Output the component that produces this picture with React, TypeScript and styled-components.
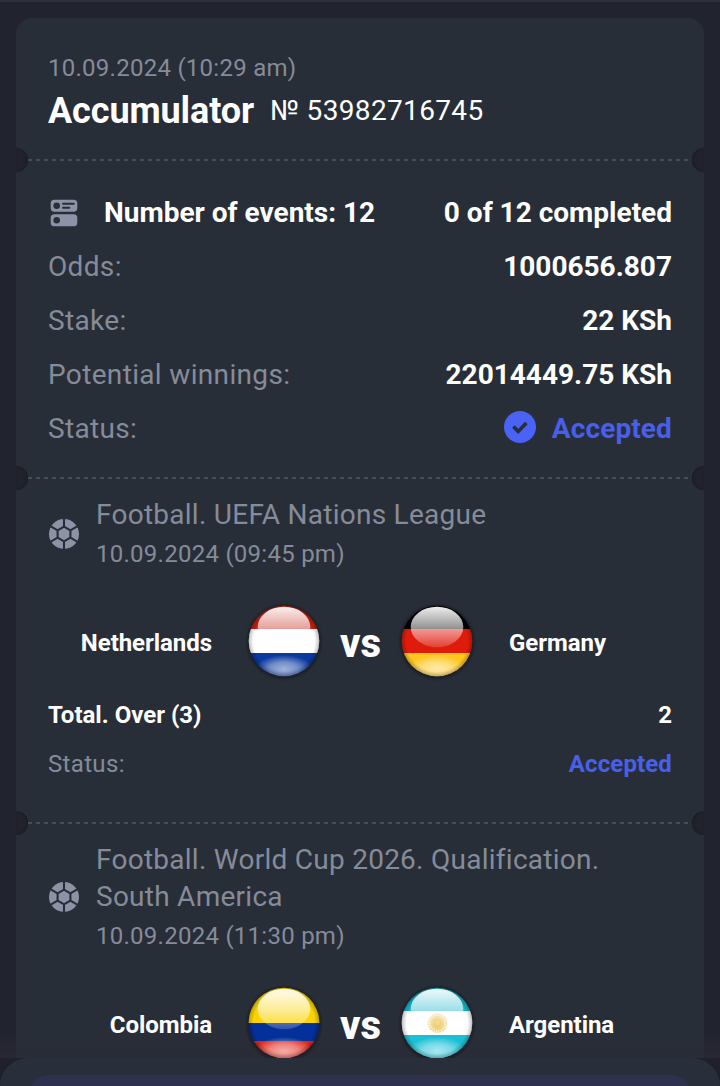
import React from "react";
import styled, { createGlobalStyle } from "styled-components";

const c = {
  page: "#21232e",
  card: "#282e38",
  muted: "#868b9a",
  white: "#ffffff",
  accent: "#485fec",
  icon: "#8d92a6",
  dash: "#474c58",
  notch: "#20222c",
};

const Global = createGlobalStyle`
  * { box-sizing: border-box; }
  body {
    margin: 0;
    background: ${c.page};
    font-family: Roboto, "Liberation Sans", sans-serif;
    overflow: hidden;
  }
`;

const Screen = styled.main`
  position: relative;
  height: 1086px;
  overflow: hidden;
  border-top: 2px solid #2b303b;
  background: ${c.page};
  padding: 16px 16px 0;
`;

const Card = styled.article`
  background: ${c.card};
  border-radius: 16px 16px 0 0;
`;

const Section = styled.section<{ $h: number; $pad: string }>`
  position: relative;
  height: ${(p) => p.$h}px;
  padding: ${(p) => p.$pad};
`;

const Perforation = styled.div`
  position: absolute;
  left: 0;
  right: 0;
  bottom: -12px;
  height: 24px;
  display: flex;
  align-items: center;
  justify-content: space-between;
  overflow: hidden;
  z-index: 1;
`;

const Notch = styled.span<{ $side: "left" | "right" }>`
  width: 12px;
  height: 24px;
  background: ${c.notch};
  border-radius: ${(p) => (p.$side === "left" ? "0 12px 12px 0" : "12px 0 0 12px")};
  box-shadow: inset ${(p) => (p.$side === "left" ? "-1px" : "1px")} 0 2px #1a1b24;
`;

const Dashes = styled.span`
  flex: 1;
  height: 2px;
  background: repeating-linear-gradient(90deg, ${c.dash} 0 4px, transparent 4px 8px);
`;

const DateText = styled.div<{ $mt?: number }>`
  margin-top: ${(p) => p.$mt ?? 0}px;
  font-size: 24px;
  line-height: 30px;
  letter-spacing: 0.26px;
  color: ${c.muted};
`;

const TitleRow = styled.div`
  display: flex;
  align-items: center;
  gap: 16px;
  margin-top: 8px;
  height: 40px;
  color: ${c.white};
`;

const Title = styled.h1`
  margin: 0;
  font-size: 36px;
  line-height: 40px;
  font-weight: 700;
  letter-spacing: -0.1px;
`;

const Ticket = styled.span`
  font-size: 28px;
  line-height: 40px;
  letter-spacing: 0.35px;
`;

const Row = styled.div`
  display: flex;
  align-items: center;
  justify-content: space-between;
  height: 54px;
  font-size: 28px;
`;

const Label = styled.span`
  color: ${c.muted};
  letter-spacing: 0.34px;
`;

const Value = styled.span<{ $accent?: boolean }>`
  display: flex;
  align-items: center;
  gap: 16px;
  font-weight: 700;
  letter-spacing: ${(p) => (p.$accent ? "0.12px" : "normal")};
  color: ${(p) => (p.$accent ? c.accent : c.white)};
`;

const EventsLabel = styled(Value)`
  gap: 24px;
`;

const EventHead = styled.header`
  display: flex;
  align-items: center;
  gap: 16px;
`;

const League = styled.h2`
  margin: 0;
  font-size: 28px;
  line-height: 37px;
  font-weight: 400;
  letter-spacing: 0.26px;
  color: ${c.muted};
  max-width: 540px;
`;

const Teams = styled.div`
  position: relative;
  z-index: 2;
  display: grid;
  grid-template-columns: 164px 36px 72px 81px 72px 36px 1fr;
  grid-template-rows: 72px;
  align-items: center;
  margin-top: 36px;
`;

const Team = styled.span<{ $home?: boolean }>`
  grid-column: ${(p) => (p.$home ? 1 : 7)};
  grid-row: 1;
  font-size: 24px;
  line-height: 30px;
  font-weight: 700;
  letter-spacing: -0.05px;
  color: ${c.white};
  text-align: ${(p) => (p.$home ? "right" : "left")};
  padding-top: 3px;
`;

const Versus = styled.span`
  grid-column: 4;
  grid-row: 1;
  padding-top: 6px;
  font-size: 40px;
  line-height: 40px;
  font-weight: 800;
  text-align: center;
  color: ${c.white};
`;

const FlagSlot = styled.span<{ $col: number }>`
  grid-column: ${(p) => p.$col};
  grid-row: 1;
  display: block;
  height: 72px;
  svg { display: block; overflow: visible; }
`;

const BetRow = styled.div<{ $mt: number }>`
  display: flex;
  justify-content: space-between;
  margin-top: ${(p) => p.$mt}px;
  font-size: 24px;
  line-height: 30px;
`;

const SheetBackdrop = styled.div`
  position: absolute;
  left: 0;
  right: 0;
  bottom: 0;
  height: 56px;
  background: linear-gradient(180deg, rgba(42, 42, 54, 0), rgba(42, 42, 54, 0.7) 28px, #1f2029 28px);
  z-index: 1;
`;

const Sheet = styled.footer`
  position: absolute;
  left: 0;
  right: 0;
  bottom: 0;
  height: 28px;
  padding: 17px 31px 0;
  background: #292f3a;
  border-radius: 36px 36px 0 0;
  overflow: hidden;
  z-index: 3;
`;

const SheetButton = styled.div`
  height: 48px;
  border-radius: 16px;
  background: #2d314e;
`;

const EventsSvg = styled.svg`
  margin-top: 2px;
`;

const EventsIcon = () => (
  <EventsSvg width="32" height="32" viewBox="0 0 32 32">
    <rect x="2.7" y="2.7" width="26.6" height="12" rx="3.6" fill={c.icon} />
    <rect x="2.7" y="17.3" width="26.6" height="12" rx="3.6" fill={c.icon} />
    <circle cx="8.7" cy="8.7" r="3.3" fill={c.card} />
    <circle cx="8.7" cy="23.3" r="3.3" fill={c.card} />
    <path d="M15 6.7h10.8M15 10.7h6.3" stroke={c.card} strokeWidth="2" strokeLinecap="round" />
  </EventsSvg>
);

const BallSvg = styled.svg`
  flex: none;
  margin-top: 2px;
`;

const BallIcon = () => (
  <BallSvg width="32" height="32" viewBox="-16 -16 32 32">
    <circle r="15" fill={c.icon} />
    <path
      d="M0-7.4L6.4-3.7V3.7L0 7.4L-6.4 3.7V-3.7Z M0-7V-16M0 7V16M6.4-3.7L14-8.1M6.4 3.7L14 8.1M-6.4 3.7L-14 8.1M-6.4-3.7L-14-8.1"
      fill="none"
      stroke={c.card}
      strokeWidth="2.1"
    />
  </BallSvg>
);

const CheckIcon = () => (
  <svg width="32" height="34" viewBox="0 0 32 34">
    <circle cx="16" cy="16" r="16" fill="#4a62f5" />
    <path d="M9.4 15.6l4.8 4.8 8.2-8.4" fill="none" stroke={c.card} strokeWidth="3.6" />
  </svg>
);

type Band = { color: string; y: number; h: number };
type FlagProps = { id: string; bands: Band[]; sun?: boolean };

const Flag = ({ id, bands, sun }: FlagProps) => (
  <svg width="72" height="72" viewBox="0 0 72 72">
    <defs>
      <clipPath id={`${id}-clip`}>
        <circle cx="36" cy="36" r="35.3" />
      </clipPath>
      <linearGradient id={`${id}-gloss`} x1="0" y1="0" x2="0" y2="1">
        <stop offset="0" stopColor="#fff" stopOpacity="0.93" />
        <stop offset="0.5" stopColor="#fff" stopOpacity="0.6" />
        <stop offset="1" stopColor="#fff" stopOpacity="0.16" />
      </linearGradient>
      <radialGradient id={`${id}-glow`}>
        <stop offset="0" stopColor="#fff" stopOpacity="0.62" />
        <stop offset="0.5" stopColor="#fff" stopOpacity="0.42" />
        <stop offset="1" stopColor="#fff" stopOpacity="0" />
      </radialGradient>
      <radialGradient id={`${id}-edge`}>
        <stop offset="0.86" stopColor="#000" stopOpacity="0" />
        <stop offset="1" stopColor="#000" stopOpacity="0.26" />
      </radialGradient>
      <radialGradient id={`${id}-shadow`}>
        <stop offset="0.88" stopColor="#14161c" stopOpacity="0.7" />
        <stop offset="1" stopColor="#14161c" stopOpacity="0" />
      </radialGradient>
    </defs>
    <circle cx="36" cy="36.8" r="39.5" fill={`url(#${id}-shadow)`} />
    <g clipPath={`url(#${id}-clip)`}>
      {bands.map((b) => (
        <rect key={b.y} x="0" y={b.y} width="72" height={b.h} fill={b.color} />
      ))}
      {sun && (
        <g fill="none">
          <circle cx="36.5" cy="36" r="8.4" stroke="#f1d987" strokeWidth="3" strokeDasharray="1.8 0.6" />
          <circle cx="36.5" cy="36" r="7" fill="#edcb60" />
          <circle cx="36.5" cy="36" r="3.4" strokeWidth="0.8" stroke="#dbb347" />
        </g>
      )}
      <ellipse cx="36" cy="64" rx="29" ry="14" fill={`url(#${id}-glow)`} />
      <circle cx="36" cy="36" r="35.5" fill={`url(#${id}-edge)`} />
      <ellipse cx="36" cy="22" rx="26.3" ry="20.3" fill={`url(#${id}-gloss)`} />
    </g>
  </svg>
);

const flags: Record<string, FlagProps> = {
  Netherlands: {
    id: "nl",
    bands: [{ color: "#c4200f", y: 0, h: 24 }, { color: "#fff", y: 24, h: 24 }, { color: "#0a389f", y: 48, h: 24 }],
  },
  Germany: {
    id: "de",
    bands: [{ color: "#000", y: 0, h: 24 }, { color: "#df1c0c", y: 24, h: 24 }, { color: "#ffc61e", y: 48, h: 24 }],
  },
  Colombia: {
    id: "co",
    bands: [{ color: "#f9d200", y: 0, h: 36 }, { color: "#04309a", y: 36, h: 18 }, { color: "#e0281c", y: 54, h: 18 }],
  },
  Argentina: {
    id: "ar",
    sun: true,
    bands: [{ color: "#17b3c5", y: 0, h: 24 }, { color: "#fff", y: 24, h: 24 }, { color: "#1cc0d6", y: 48, h: 24 }],
  },
};

const Divider = () => (
  <Perforation>
    <Notch $side="left" />
    <Dashes />
    <Notch $side="right" />
  </Perforation>
);

const EventInfo = ({ league, date, home, away }: { league: string; date: string; home: string; away: string }) => (
  <>
    <EventHead>
      <BallIcon />
      <div>
        <League>{league}</League>
        <DateText $mt={6}>{date}</DateText>
      </div>
    </EventHead>
    <Teams>
      <Team $home>{home}</Team>
      <FlagSlot $col={3}><Flag {...flags[home]} /></FlagSlot>
      <Versus>vs</Versus>
      <FlagSlot $col={5}><Flag {...flags[away]} /></FlagSlot>
      <Team>{away}</Team>
    </Teams>
  </>
);

export default function App() {
  return (
    <>
      <Global />
      <Screen>
        <Card>
          <Section $h={142} $pad="35px 32px 0">
            <DateText>10.09.2024 (10:29 am)</DateText>
            <TitleRow>
              <Title>Accumulator</Title>
              <Ticket>№ 53982716745</Ticket>
            </TitleRow>
            <Divider />
          </Section>
          <Section $h={318} $pad="25px 32px 0">
            <Row>
              <EventsLabel>
                <EventsIcon />
                Number of events: 12
              </EventsLabel>
              <Value>0 of 12 completed</Value>
            </Row>
            <Row><Label>Odds:</Label><Value>1000656.807</Value></Row>
            <Row><Label>Stake:</Label><Value>22 KSh</Value></Row>
            <Row><Label>Potential winnings:</Label><Value>22014449.75 KSh</Value></Row>
            <Row>
              <Label>Status:</Label>
              <Value $accent><CheckIcon />Accepted</Value>
            </Row>
            <Divider />
          </Section>
          <Section $h={345} $pad="18px 32px 0">
            <EventInfo
              league="Football. UEFA Nations League"
              date="10.09.2024 (09:45 pm)"
              home="Netherlands"
              away="Germany"
            />
            <BetRow $mt={23}><Value>Total. Over (3)</Value><Value>2</Value></BetRow>
            <BetRow $mt={19}><Label>Status:</Label><Value $accent>Accepted</Value></BetRow>
            <Divider />
          </Section>
          <Section $h={263} $pad="18px 32px 0">
            <EventInfo
              league="Football. World Cup 2026. Qualification. South America"
              date="10.09.2024 (11:30 pm)"
              home="Colombia"
              away="Argentina"
            />
          </Section>
        </Card>
        <SheetBackdrop />
        <Sheet><SheetButton /></Sheet>
      </Screen>
    </>
  );
}
